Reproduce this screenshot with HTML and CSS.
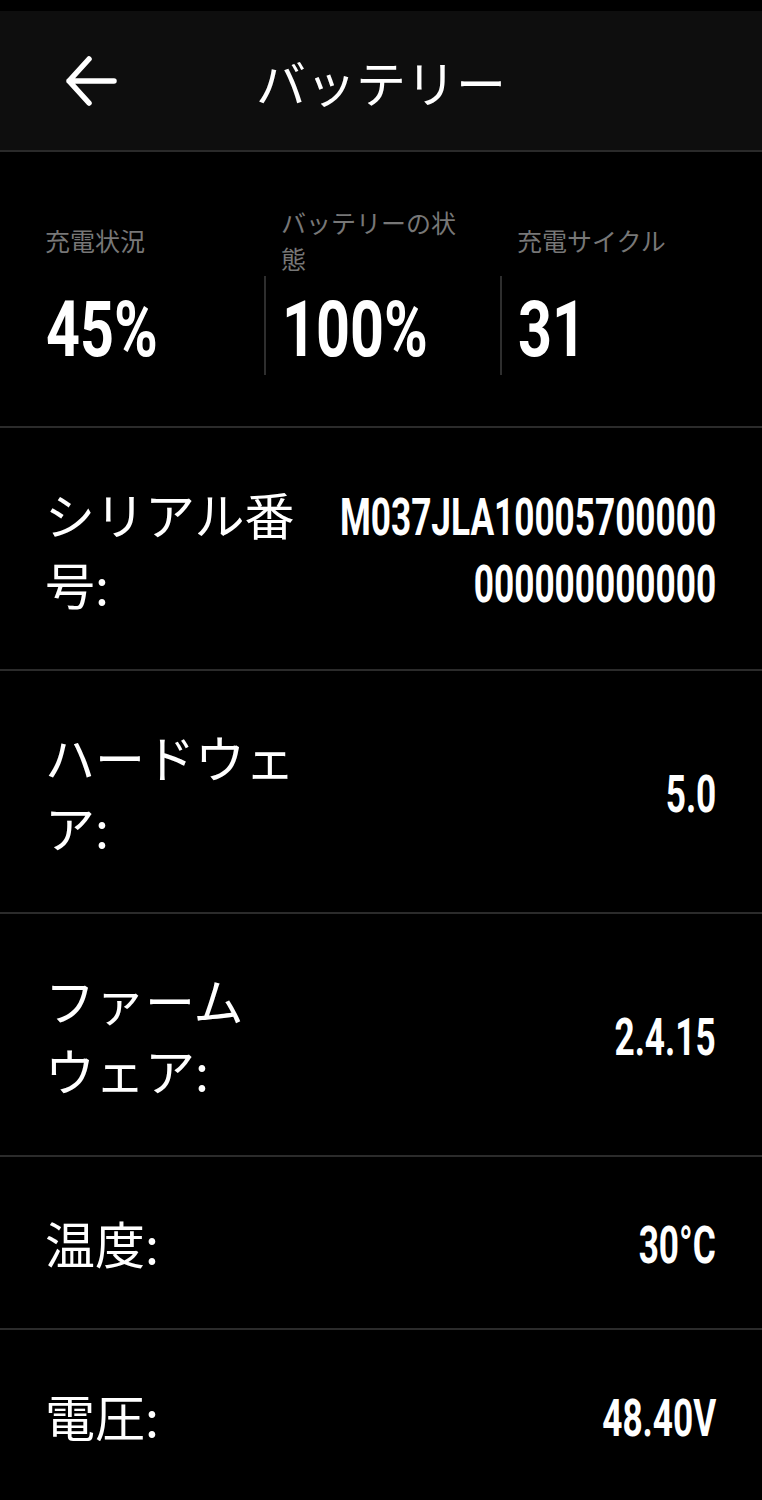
FILE: index.html
```html
<!DOCTYPE html>
<html lang="ja">
<head>
<meta charset="utf-8">
<title>バッテリー</title>
<link rel="stylesheet" href="styles.css">
</head>
<body>
<div class="statusbar"></div>
<header class="header">
  <div class="back">
    <svg width="52" height="52" viewBox="0 0 52 52" aria-hidden="true">
      <path d="M24 4 L4 26 L24 48 M4 26 L49 26" fill="none" stroke="#fff" stroke-width="5.5" stroke-linecap="round" stroke-linejoin="round"/>
    </svg>
  </div>
  <h1 class="title">バッテリー</h1>
  <div></div>
</header>

<section class="stats">
  <div class="stat">
    <div class="stat-label">充電状況</div>
    <div class="stat-value"><span class="num">45%</span></div>
  </div>
  <div class="stat">
    <div class="stat-label">バッテリーの状態</div>
    <div class="stat-value divided"><span class="num">100%</span></div>
  </div>
  <div class="stat">
    <div class="stat-label">充電サイクル</div>
    <div class="stat-value divided"><span class="num">31</span></div>
  </div>
</section>

<div class="row">
  <div class="row-label">シリアル番号:</div>
  <div class="row-value"><span class="num">M037JLA10005700000<br>000000000000</span></div>
</div>
<div class="row">
  <div class="row-label">ハードウェア:</div>
  <div class="row-value"><span class="num">5.0</span></div>
</div>
<div class="row">
  <div class="row-label">ファームウェア:</div>
  <div class="row-value"><span class="num">2.4.15</span></div>
</div>
<div class="row">
  <div class="row-label">温度:</div>
  <div class="row-value"><span class="num">30°C</span></div>
</div>
<div class="row">
  <div class="row-label">電圧:</div>
  <div class="row-value"><span class="num">48.40V</span></div>
</div>
</body>
</html>
```

FILE: styles.css
```css
* { box-sizing: border-box; }

html, body {
  margin: 0;
  padding: 0;
  background: #000;
  color: #fff;
  font-family: "Noto Sans CJK JP", "Noto Sans", sans-serif;
}

body {
  width: 762px;
  overflow: hidden;
}

.statusbar {
  height: 11px;
  background: #000;
}

.header {
  height: 141px;
  background: #0e0e0e;
  border-bottom: 2px solid #2a2a2a;
  display: grid;
  grid-template-columns: 1fr auto 1fr;
  align-items: center;
}

.back {
  padding-left: 65px;
  display: flex;
  align-items: center;
}

.back svg { display: block; }

.title {
  margin: 0;
  font-size: 50px;
  font-weight: 400;
  line-height: 1;
}

.stats {
  display: grid;
  grid-template-columns: repeat(3, 1fr);
  padding: 52px 26px 51px 28px;
  border-bottom: 2px solid #2b2b2b;
}

.stat { min-width: 0; }

.stat-label {
  height: 72px;
  display: flex;
  align-items: center;
  padding: 0 30px 0 17px;
  color: #777;
  font-size: 25px;
  line-height: 36px;
}

.stat-value {
  height: 99px;
  display: flex;
  align-items: center;
  padding-left: 16px;
  border-left: 2px solid transparent;
}

.stat-value.divided { border-left-color: #2e2e2e; }

.stat-value .num {
  font-size: 77px;
  line-height: 1;
  transform: scaleX(0.77);
  transform-origin: left center;
  padding-top: 9px;
}

.num {
  display: inline-block;
  white-space: nowrap;
  font-family: "Roboto", "DejaVu Sans Condensed", sans-serif;
  font-weight: 700;
}

.row {
  display: flex;
  align-items: center;
  padding: 50px 46px 51px 45px;
  border-bottom: 2px solid #2b2b2b;
}

.row-label {
  flex: 0 0 262px;
  font-size: 50px;
  line-height: 70px;
  line-break: strict;
}

.row-value {
  flex: 1 1 auto;
  min-width: 0;
  display: flex;
  justify-content: flex-end;
}

.row-value .num {
  text-align: right;
  font-size: 51px;
  line-height: 67px;
  transform: translateY(3px) scaleX(0.69);
  transform-origin: right center;
}
```
